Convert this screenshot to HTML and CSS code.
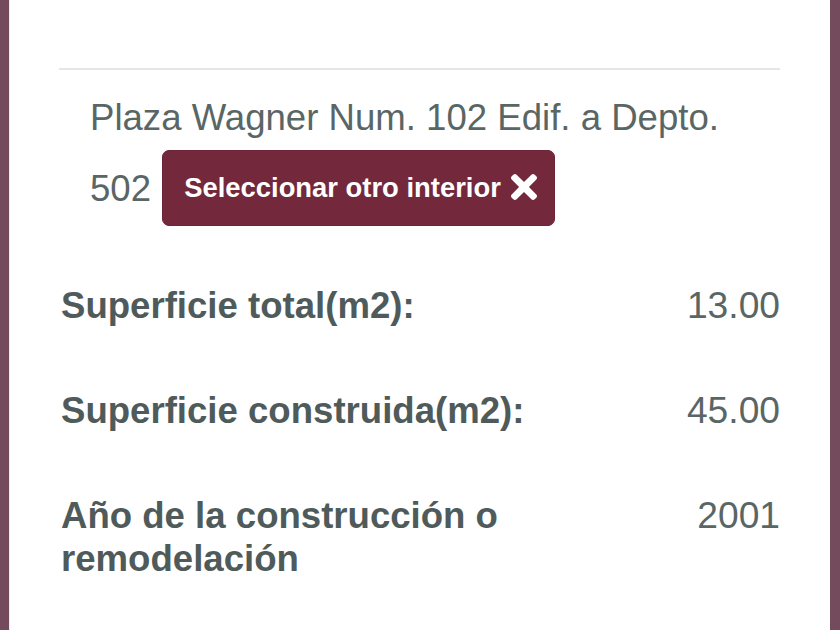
FILE: index.html
```html
<!DOCTYPE html>
<html lang="es">
<head>
<meta charset="utf-8">
<title>Interior</title>
<link rel="stylesheet" href="styles.css">
</head>
<body>
<div class="panel">
  <hr class="divider">
  <p class="address">Plaza Wagner Num. 102 Edif. a Depto. 502 <button class="btn-change" type="button">Seleccionar otro interior<svg class="icon-x" viewBox="0 80 352 352" aria-hidden="true"><path d="M242.72 256l100.07-100.07c12.280-12.280 12.280-32.190 0-44.480l-22.240-22.240c-12.280-12.280-32.190-12.280-44.480 0L176 189.280 75.930 89.210c-12.280-12.280-32.190-12.280-44.480 0L9.210 111.450c-12.280 12.280-12.280 32.190 0 44.480L109.280 256 9.210 356.070c-12.280 12.280-12.280 32.190 0 44.480l22.240 22.240c12.280 12.280 32.200 12.280 44.480 0L176 322.720l100.070 100.070c12.280 12.280 32.200 12.280 44.480 0l22.240-22.240c12.280-12.280 12.280-32.190 0-44.480L242.720 256z" fill="currentColor"/></svg></button></p>
  <div class="rows">
    <div class="row">
      <div class="label">Superficie total(m2):</div>
      <div class="value">13.00</div>
    </div>
    <div class="row">
      <div class="label">Superficie construida(m2):</div>
      <div class="value">45.00</div>
    </div>
    <div class="row">
      <div class="label">Año de la construcción o remodelación</div>
      <div class="value">2001</div>
    </div>
  </div>
</div>
</body>
</html>
```
FILE: styles.css
```css
html, body {
  margin: 0;
  padding: 0;
  height: 100%;
}
body {
  background: #744b5d;
  font-family: "Liberation Sans", Arial, sans-serif;
  color: #56615f;
  overflow: hidden;
}
.panel {
  background: #ffffff;
  margin: 0 10px 0 9px;
  height: 630px;
  box-sizing: border-box;
  padding: 68px 50px 0 49px;
  border-left: 1px solid #f3e9ee;
}
.divider {
  border: 0;
  height: 2px;
  background: #e4e7e9;
  margin: 0;
}
.address {
  margin: 16px 0 0 0;
  padding: 0 20px 0 31px;
  font-size: 36.6px;
  line-height: 64px;
  color: #5a6665;
}
.btn-change {
  display: inline-block;
  vertical-align: 4px;
  font-family: "Liberation Sans", Arial, sans-serif;
  font-weight: bold;
  font-size: 27.4px;
  line-height: 37px;
  color: #ffffff;
  background: #73283c;
  border: 1px solid #6c2437;
  border-radius: 7px;
  padding: 18px 17px 19px 21px;
  margin-left: 1px;
}
.icon-x {
  width: 26px;
  height: 26px;
  vertical-align: -3px;
  margin-left: 10px;
}
.rows {
  display: flex;
  flex-direction: column;
  gap: 62px;
  padding: 58px 0 0 2px;
}
.row {
  display: flex;
  align-items: flex-start;
  font-size: 36.6px;
  line-height: 43px;
}
.label {
  flex: 0 0 480px;
  font-weight: bold;
  color: #4f5b5b;
}
.value {
  flex: 1;
  text-align: right;
  font-size: 37.2px;
  color: #5a6665;
}
```
